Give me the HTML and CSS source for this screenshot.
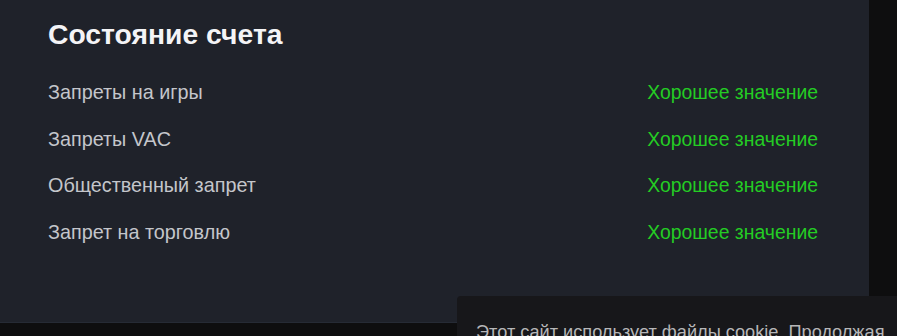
FILE: index.html
```html
<!DOCTYPE html>
<html lang="ru">
<head>
    <meta charset="UTF-8">
    <title>Состояние счета</title>
    <link rel="stylesheet" href="styles.css">
</head>
<body>
    <div class="account-card">
        <h2 class="card-title">Состояние счета</h2>
        <div class="status-list">
            <div class="status-row">
                <span class="status-label">Запреты на игры</span>
                <span class="status-value">Хорошее значение</span>
            </div>
            <div class="status-row">
                <span class="status-label">Запреты VAC</span>
                <span class="status-value">Хорошее значение</span>
            </div>
            <div class="status-row">
                <span class="status-label">Общественный запрет</span>
                <span class="status-value">Хорошее значение</span>
            </div>
            <div class="status-row">
                <span class="status-label">Запрет на торговлю</span>
                <span class="status-value">Хорошее значение</span>
            </div>
        </div>
    </div>

    <div class="cookie-popup">
        <p>Этот сайт использует файлы cookie. Продолжая<br>использовать сайт, вы соглашаетесь с этим.</p>
    </div>
</body>
</html>
```

FILE: styles.css
```css
body {
    margin: 0;
    background: #0e0e0f;
    font-family: "Liberation Sans", Arial, sans-serif;
    overflow: hidden;
}
.account-card {
    width: 869px;
    height: 323px;
    box-sizing: border-box;
    padding: 18px 51px 0 48px;
    background: #1f222a;
    border-bottom: 1px solid #262b35;
}
.card-title {
    margin: 0 0 19px;
    font-size: 28.3px;
    line-height: 32px;
    font-weight: bold;
    color: #f4f4f6;
}
.status-row {
    display: flex;
    justify-content: space-between;
    align-items: baseline;
    padding: 10px 0;
    font-size: 19.8px;
    line-height: 26.67px;
}
.status-label {
    color: #c4c6cb;
}
.status-value {
    font-size: 19.4px;
    color: #24cc24;
}
.cookie-popup {
    position: fixed;
    left: 457px;
    top: 296px;
    width: 480px;
    height: 120px;
    box-sizing: border-box;
    padding: 23px 19px;
    background: #17171a;
    border-radius: 4px;
}
.cookie-popup p {
    margin: 0;
    font-size: 18.2px;
    line-height: 26px;
    white-space: nowrap;
    color: #b6b6b8;
}
```
